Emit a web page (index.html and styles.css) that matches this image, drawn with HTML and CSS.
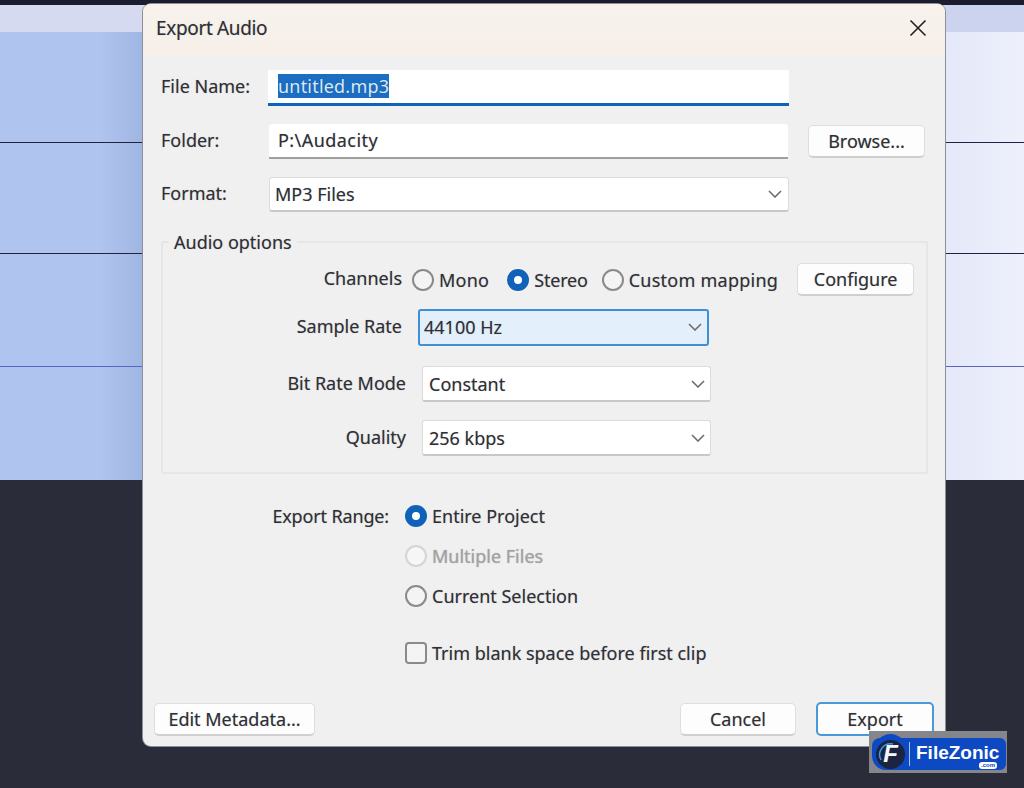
FILE: index.html
```html
<!DOCTYPE html>
<html lang="en">
<head>
    <meta charset="UTF-8">
    <title>Export Audio</title>
    <link rel="stylesheet" href="styles.css">
</head>
<body>

<!-- project window behind the dialog -->
<div class="top-strip"></div>
<div class="ruler"></div>
<div class="track"></div>
<div class="track"></div>
<div class="track track-thin"></div>
<div class="track track-last"></div>
<div class="empty-area"></div>

<div class="dialog">
    <div class="title-bar">
        <span class="title">Export Audio</span>
        <svg class="close-icon" width="18" height="18" viewBox="0 0 18 18"><path d="M1.5 1.5 16.5 16.5M16.5 1.5 1.5 16.5"/></svg>
    </div>

    <div class="file-rows">
        <div class="file-row">
            <span class="file-label">File Name:</span>
            <div class="text-field focused"><span class="selected-text">untitled.mp3</span></div>
        </div>
        <div class="file-row">
            <span class="file-label">Folder:</span>
            <div class="text-field folder-field">P:\Audacity</div>
            <button class="btn browse-btn">Browse...</button>
        </div>
        <div class="file-row">
            <span class="file-label">Format:</span>
            <div class="select format-select">
                MP3 Files
                <svg class="chevron" width="14" height="8" viewBox="0 0 14 8"><path d="M1 1 7 7 13 1"/></svg>
            </div>
        </div>
    </div>

    <fieldset class="options">
        <legend>Audio options</legend>
        <div class="opt-row channels-row">
            <span class="opt-label">Channels</span>
            <label class="choice mono"><span class="radio"></span>Mono</label>
            <label class="choice stereo"><span class="radio checked"></span>Stereo</label>
            <label class="choice custom"><span class="radio"></span>Custom mapping</label>
            <button class="btn configure-btn">Configure</button>
        </div>
        <div class="opt-row rate-row">
            <span class="opt-label">Sample Rate</span>
            <div class="select rate-select">
                44100 Hz
                <svg class="chevron" width="14" height="8" viewBox="0 0 14 8"><path d="M1 1 7 7 13 1"/></svg>
            </div>
        </div>
        <div class="opt-row mode-row">
            <span class="opt-label wide">Bit Rate Mode</span>
            <div class="select small-select">
                Constant
                <svg class="chevron" width="14" height="8" viewBox="0 0 14 8"><path d="M1 1 7 7 13 1"/></svg>
            </div>
        </div>
        <div class="opt-row quality-row">
            <span class="opt-label wide">Quality</span>
            <div class="select small-select">
                256 kbps
                <svg class="chevron" width="14" height="8" viewBox="0 0 14 8"><path d="M1 1 7 7 13 1"/></svg>
            </div>
        </div>
    </fieldset>

    <div class="range">
        <span class="range-label">Export Range:</span>
        <div class="range-list">
            <label class="choice"><span class="radio checked"></span>Entire Project</label>
            <label class="choice disabled"><span class="radio"></span>Multiple Files</label>
            <label class="choice"><span class="radio"></span>Current Selection</label>
            <label class="choice trim"><span class="checkbox"></span>Trim blank space before first clip</label>
        </div>
    </div>

    <div class="footer">
        <button class="btn metadata-btn">Edit Metadata...</button>
        <div class="footer-right">
            <button class="btn cancel-btn">Cancel</button>
            <button class="btn export-btn">Export</button>
        </div>
    </div>
</div>

<!-- watermark -->
<div class="badge">
    <div class="badge-pill">
        <div class="badge-logo">
            <svg class="badge-arc" width="29" height="29" viewBox="0 0 29 29"><path d="M5 20A11 11 0 0 1 17 4"/></svg>
            <span class="badge-f">F</span>
        </div>
        <span class="badge-bar"></span>
        <span class="badge-name">FileZonic</span>
        <span class="badge-com">.com</span>
    </div>
</div>

</body>
</html>
```

FILE: styles.css
```css
* {
    margin: 0;
    padding: 0;
    box-sizing: border-box;
}
body {
    width: 1024px;
    height: 788px;
    overflow: hidden;
    position: relative;
    display: flex;
    flex-direction: column;
    background-color: #2a2c3a;
    font-family: "Noto Sans", sans-serif;
    font-size: 18px;
    color: #2f2f35;
    text-shadow: 0 0 1px rgba(50, 50, 60, 0.35);
}

/* project window */
.top-strip {
    height: 5px;
    background-color: #1b1d2e;
}
.ruler {
    height: 27px;
    background: linear-gradient(to right, #d5daf0 50%, #ccd3ee 50%);
}
.track {
    height: 111px;
    background: linear-gradient(to right, #afc5ef 100px, #a0b6e2 143px, #a0b6e2 50%, #e4e8f8 945px, #eef0fc 100%);
    border-bottom: 1px solid #1d2340;
}
.track-thin {
    height: 113px;
    border-bottom-color: #5c63c4;
}
.track-last {
    height: 113px;
    border-bottom: none;
}
.empty-area {
    flex: 1;
    background-color: #2a2c3a;
}

/* dialog */
.dialog {
    position: absolute;
    left: 143px;
    top: 4px;
    width: 802px;
    height: 742px;
    display: flex;
    flex-direction: column;
    background-color: #f0f0f0;
    border-radius: 8px;
    overflow: hidden;
    box-shadow: 0 0 0 1px #8d8f98;
}
.title-bar {
    height: 52px;
    flex-shrink: 0;
    display: flex;
    align-items: center;
    justify-content: space-between;
    padding: 0 18px 4px 13px;
    background: linear-gradient(to bottom, #f8f2ec, #f7f0ea);
}
.title {
    font-size: 19px;
    letter-spacing: -0.35px;
}
.close-icon path {
    fill: none;
    stroke: #222;
    stroke-width: 1.6;
}

.file-rows {
    display: flex;
    flex-direction: column;
    gap: 18px;
    padding: 14px 0 0 18px;
}
.file-row {
    display: flex;
    align-items: center;
}
.file-label {
    width: 107px;
    margin-bottom: 4px;
}
.text-field {
    width: 519px;
    height: 35px;
    display: flex;
    align-items: center;
    padding: 0 0 2px 9px;
    background-color: #fff;
    border-radius: 3px 3px 0 0;
    border-bottom: 2px solid #a0a0a0;
}
.text-field.focused {
    width: 521px;
    height: 36px;
    padding-left: 10px;
    border-bottom: 3px solid #0f62b8;
    border-radius: 0;
}
.folder-field {
    margin-left: 1px;
    letter-spacing: 0.45px;
}
.selected-text {
    background-color: #1b6ec2;
    color: #d8eafa;
    line-height: 24px;
    letter-spacing: 0.2px;
}

.select {
    height: 36px;
    display: flex;
    align-items: center;
    justify-content: space-between;
    background-color: #fff;
    border: 1px solid #dcdcdc;
    border-bottom: 2px solid #c8c8c8;
    border-radius: 3px;
    padding: 0 6px;
}
.format-select {
    width: 520px;
    height: 35px;
    margin-left: 1px;
    padding-left: 5px;
}
.rate-select {
    width: 291px;
    height: 37px;
    background-color: #e3f0fb;
    border: 2px solid #3d8fd6;
    padding: 0 5px 2px 4px;
}
.small-select {
    width: 289px;
    padding-right: 5px;
}
.chevron path {
    fill: none;
    stroke: #6e6e6e;
    stroke-width: 1.6;
}

.btn {
    font-family: inherit;
    font-size: 18px;
    color: #2f2f35;
    text-shadow: 0 0 1px rgba(50, 50, 60, 0.35);
    background-color: #fdfdfd;
    border: 1px solid #dedede;
    border-bottom: 2px solid #cfcfcf;
    border-radius: 5px;
    height: 33px;
}
.browse-btn {
    width: 117px;
    margin-left: 20px;
}
.configure-btn {
    width: 117px;
}

/* audio options box */
.options {
    margin: 18px 17px 0 18px;
    padding: 0 0 16px;
    border: 2px solid #e6e6e6;
    border-radius: 2px;
}
.options legend {
    margin-left: 6px;
    padding: 0 5px;
    font-size: 18px;
    line-height: 24px;
}
.opt-row {
    display: flex;
    align-items: center;
}
.channels-row {
    margin-top: 9px;
    height: 33px;
}
.rate-row {
    margin-top: 13px;
}
.mode-row {
    margin-top: 20px;
}
.quality-row {
    margin-top: 18px;
}
.opt-label {
    width: 239px;
    margin-right: 16px;
    margin-bottom: 4px;
    text-align: right;
}
.opt-label.wide {
    width: 243px;
    margin-bottom: 2px;
}
.channels-row .opt-label {
    margin-right: 10px;
}

/* radios and checkbox */
.choice {
    display: flex;
    align-items: center;
    gap: 5px;
    line-height: 24px;
}
.mono {
    margin-right: 18px;
    letter-spacing: 0.25px;
}
.stereo {
    margin-right: 14px;
    letter-spacing: -0.2px;
}
.custom {
    margin-right: 19px;
    letter-spacing: 0.25px;
}
.radio {
    width: 22px;
    height: 22px;
    flex-shrink: 0;
    border: 2px solid #8a8a8a;
    border-radius: 50%;
    background-color: #f4f4f4;
}
.radio.checked {
    border: 7px solid #0f62b8;
    background-color: #fff;
}
.checkbox {
    width: 22px;
    height: 22px;
    flex-shrink: 0;
    border: 2px solid #8a8a8a;
    border-radius: 4px;
    background-color: #f4f4f4;
}
.choice.disabled {
    color: #a2a2a2;
}
.choice.disabled .radio {
    border-color: #d4d4d4;
    background-color: #f6f6f6;
}

/* export range */
.range {
    display: flex;
    margin-top: 30px;
}
.range-label {
    width: 246px;
    margin-right: 16px;
    text-align: right;
    line-height: 24px;
    letter-spacing: -0.15px;
}
.range-list {
    display: flex;
    flex-direction: column;
    gap: 16px;
}
.trim {
    margin-top: 17px;
}

/* bottom buttons */
.footer {
    margin-top: auto;
    padding: 0 11px 10px;
    display: flex;
    align-items: center;
    justify-content: space-between;
}
.footer-right {
    display: flex;
    align-items: center;
    gap: 20px;
}
.metadata-btn {
    width: 161px;
}
.cancel-btn {
    width: 116px;
}
.export-btn {
    width: 118px;
    height: 34px;
    border: 2px solid #4a97da;
}

/* FileZonic watermark */
.badge {
    position: absolute;
    left: 869px;
    top: 731px;
    width: 138px;
    height: 42px;
    background-color: #85868c;
    text-shadow: none;
}
.badge-pill {
    position: absolute;
    left: 3px;
    top: 7px;
    width: 134px;
    height: 32px;
    display: flex;
    align-items: center;
    background-color: #0e49c4;
    border-radius: 8px 6px 6px 14px;
}
.badge-logo {
    position: relative;
    width: 29px;
    height: 29px;
    margin-left: 4px;
    display: flex;
    align-items: center;
    justify-content: center;
    background-color: #1b2440;
    border-radius: 50%;
    box-shadow: 0 -5px 0 1px #0e49c4;
}
.badge-arc {
    position: absolute;
    left: 0;
    top: 0;
}
.badge-arc path {
    fill: none;
    stroke: #3f9be8;
    stroke-width: 1.5;
}
.badge-f {
    position: relative;
    font-family: "Liberation Sans", sans-serif;
    font-size: 24px;
    font-weight: bold;
    font-style: italic;
    line-height: 1;
    color: #f2f6ff;
}
.badge-bar {
    width: 1px;
    height: 24px;
    margin-left: 4px;
    background-color: #a9c4f4;
}
.badge-name {
    margin-left: 6px;
    font-family: "Liberation Sans", sans-serif;
    font-size: 19px;
    font-weight: bold;
    line-height: 1;
    color: #fff;
    margin-top: -4px;
}
.badge-com {
    position: absolute;
    left: 107px;
    top: 24px;
    width: 18px;
    height: 7px;
    background-color: #fff;
    border-radius: 3px;
    font-family: "Liberation Sans", sans-serif;
    font-size: 6px;
    font-weight: bold;
    line-height: 7px;
    text-align: center;
    color: #0e49c4;
}
```
